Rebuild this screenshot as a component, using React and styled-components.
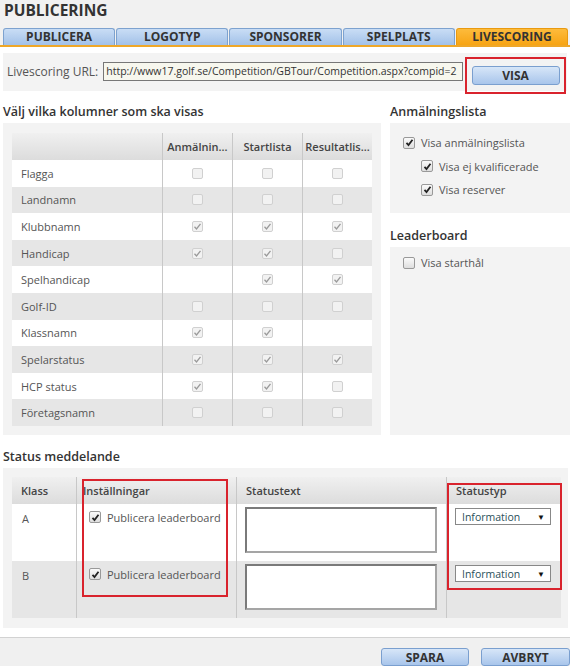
import React from 'react'
import styled, { createGlobalStyle } from 'styled-components'

const GlobalStyle = createGlobalStyle`
  body {
    margin: 0;
    background: #ffffff;
    font-family: 'Open Sans', 'Liberation Sans', sans-serif;
    color: #444;
  }
`

const Page = styled.div`
  width: 570px;
  height: 666px;
  overflow: hidden;
  display: flex;
  flex-direction: column;
`

const Header = styled.div`
  height: 28px;
  background: #f1f1f1;
  padding: 0 0 0 4px;
  box-sizing: border-box;
`

const Title = styled.h1`
  margin: 0;
  font-size: 15.5px;
  line-height: 20px;
  font-weight: 700;
  color: #333;
`

const Tabs = styled.div`
  display: flex;
  gap: 1px;
  padding: 0 2px 0 3px;
  background: #f1f1f1;
  border-bottom: 2px solid #efa728;
`

const Tab = styled.div`
  flex: 1;
  height: 16px;
  display: flex;
  align-items: center;
  justify-content: center;
  font-size: 12px;
  font-weight: 700;
  color: #333;
  border: 1px solid ${p => (p.active ? '#e99a10' : '#7da2cf')};
  border-bottom: none;
  border-radius: 3px 3px 0 0;
  background: ${p =>
    p.active
      ? 'linear-gradient(#fdbb3c, #f7a414)'
      : 'linear-gradient(#c9ddf5, #a2c1e8)'};
`

const UrlPanel = styled.div`
  margin: 6px 3px 0;
  height: 39px;
  background: #f3f3f3;
  display: flex;
  align-items: center;
  padding-left: 4px;
  position: relative;
`

const UrlLabel = styled.span`
  font-size: 12px;
  color: #555;
  margin-right: 5px;
`

const UrlInput = styled.div`
  width: 356px;
  height: 17px;
  border: 1px solid #777;
  background: #f7f7ee;
  font-size: 10.5px;
  color: #333;
  line-height: 17px;
  padding-left: 2px;
  white-space: nowrap;
  overflow: hidden;
`

const VisaFrame = styled.div`
  position: absolute;
  left: 462px;
  top: 4px;
  width: 97px;
  height: 33px;
  border: 2px solid #d9232d;
  display: flex;
  align-items: center;
  justify-content: center;
`

const Button = styled.button`
  width: ${p => p.w || 86}px;
  height: ${p => p.h || 19}px;
  border: 1px solid #7a9fcf;
  border-radius: 3px;
  background: linear-gradient(#d7e6f8, #a8c5eb);
  font-family: 'Open Sans', 'Liberation Sans', sans-serif;
  font-size: 12px;
  font-weight: 700;
  color: #333;
  padding: 0;
`

const Columns = styled.div`
  display: grid;
  grid-template-columns: 378px 180px;
  column-gap: 9px;
  padding-left: 3px;
  margin-top: 9px;
`

const Col = styled.div`
  display: flex;
  flex-direction: column;
`

const Section = styled(Col)`
  padding: 0 2px 0 3px;
  margin-top: 10px;
`

const Heading = styled.h2`
  margin: 0;
  height: 23px;
  display: flex;
  align-items: center;
  font-size: 12.5px;
  font-weight: 600;
  color: #333;
`

const Panel = styled.div`
  background: #f3f3f3;
  padding: ${p => p.pad || '10px 9px 9px'};
  height: ${p => (p.h ? `${p.h}px` : 'auto')};
  box-sizing: border-box;
  margin-bottom: ${p => p.mb || 0}px;
`

const Grid = styled.div`
  display: grid;
  grid-template-columns: ${p => p.cols};
`

const HeadCell = styled.div`
  height: 27px;
  display: flex;
  align-items: center;
  justify-content: ${p => (p.center ? 'center' : 'flex-start')};
  padding-left: ${p => (p.center ? 0 : p.pl || 9)}px;
  background: linear-gradient(#f0f0f0, #dcdcdc);
  border-left: ${p => (p.first ? 'none' : '1px solid #c8c8c8')};
  font-size: 11px;
  font-weight: 600;
  color: #444;
  white-space: nowrap;
`

const Cell = styled.div`
  height: ${p => p.h || 26.6}px;
  display: flex;
  align-items: ${p => (p.top ? 'flex-start' : 'center')};
  justify-content: ${p => (p.center ? 'center' : 'flex-start')};
  padding-left: ${p => (p.center ? 0 : p.pl || 9)}px;
  padding-top: ${p => (p.top ? p.pt || 4 : 0)}px;
  box-sizing: border-box;
  background: ${p => (p.odd ? '#e6e6e6' : '#ffffff')};
  border-left: ${p => (p.first ? 'none' : '1px solid #c8c8c8')};
  font-size: 11px;
  color: #555;
`

const Box = styled.span`
  width: ${p => (p.dim ? 11 : 12)}px;
  height: ${p => (p.dim ? 11 : 12)}px;
  box-sizing: border-box;
  border: 1px solid ${p => (p.dim ? '#d0d0d0' : '#999')};
  border-radius: 2px;
  background: ${p => (p.dim ? '#f2f2f2' : 'linear-gradient(#fafafa, #dedede)')};
  display: inline-flex;
  align-items: center;
  justify-content: center;
  flex-shrink: 0;
`

const Check = ({ on, dim }) => (
  <Box dim={dim}>
    {on && (
      <svg width="9" height="9" viewBox="0 0 9 9">
        <path
          d="M1.5 4.8 L3.5 7 L7.5 1.8"
          fill="none"
          stroke={dim ? '#9a9a9a' : '#222'}
          strokeWidth={dim ? 1.3 : 1.8}
        />
      </svg>
    )}
  </Box>
)

const Option = styled.label`
  display: flex;
  align-items: center;
  gap: 6px;
  height: ${p => p.h || 23.5}px;
  padding-left: ${p => p.indent || 0}px;
  font-size: 11px;
  color: #555;
  white-space: nowrap;
`

const OptionList = styled.div`
  padding: ${p => p.pt || 8}px 0 0 13px;
`

const StatusFrame = styled.div`
  position: relative;
`

const RedBox = styled.div`
  position: absolute;
  left: ${p => p.x}px;
  top: ${p => p.y}px;
  width: ${p => p.w}px;
  height: ${p => p.h}px;
  box-sizing: border-box;
  border: 2px solid #d9232d;
  pointer-events: none;
`

const TextArea = styled.div`
  width: 192px;
  height: 46px;
  box-sizing: border-box;
  border: 2px solid #a5a5a5;
  border-top-color: #7a7a7a;
  border-left-color: #7a7a7a;
  background: #fff;
`

const Select = styled.div`
  width: 96px;
  height: 17px;
  box-sizing: border-box;
  border: 1px solid #888;
  background: #fff;
  display: flex;
  align-items: center;
  justify-content: space-between;
  padding: 0 5px 0 6px;
  font-size: 10.5px;
  color: #2a4f5a;
  & span:last-child {
    font-size: 8px;
    color: #111;
  }
`

const Footer = styled.div`
  margin-top: 9px;
  border-top: 1px solid #d2d2d2;
  background: #f0f0f0;
  flex: 1;
  display: flex;
  justify-content: flex-end;
  align-items: flex-start;
  gap: 12px;
  padding: 10px 0 0 0;
`

const rows = [
  ['Flagga', 0, 0, 0],
  ['Landnamn', 0, 0, 0],
  ['Klubbnamn', 1, 1, 1],
  ['Handicap', 1, 1, 0],
  ['Spelhandicap', null, 1, 1],
  ['Golf-ID', 0, 0, 0],
  ['Klassnamn', 1, 1, null],
  ['Spelarstatus', 1, 1, 1],
  ['HCP status', 1, 1, 0],
  ['Företagsnamn', 0, 0, 0],
]

const classes = ['A', 'B']

export default function App() {
  return (
    <Page>
      <GlobalStyle />
      <Header>
        <Title>PUBLICERING</Title>
      </Header>
      <Tabs>
        <Tab>PUBLICERA</Tab>
        <Tab>LOGOTYP</Tab>
        <Tab>SPONSORER</Tab>
        <Tab>SPELPLATS</Tab>
        <Tab active>LIVESCORING</Tab>
      </Tabs>
      <UrlPanel>
        <UrlLabel>Livescoring URL:</UrlLabel>
        <UrlInput>http://www17.golf.se/Competition/GBTour/Competition.aspx?compid=2</UrlInput>
        <VisaFrame>
          <Button w={88}>VISA</Button>
        </VisaFrame>
      </UrlPanel>

      <Columns>
        <Col>
          <Heading>Välj vilka kolumner som ska visas</Heading>
          <Panel>
            <Grid cols="150px 70px 70px 70px">
              <HeadCell first />
              <HeadCell center>Anmälnin...</HeadCell>
              <HeadCell center>Startlista</HeadCell>
              <HeadCell center>Resultatlis...</HeadCell>
              {rows.map(([name, a, b, c], i) => (
                <React.Fragment key={name}>
                  <Cell first odd={i % 2 === 1}>{name}</Cell>
                  {[a, b, c].map((v, j) => (
                    <Cell key={j} center odd={i % 2 === 1}>
                      {v !== null && <Check dim on={v === 1} />}
                    </Cell>
                  ))}
                </React.Fragment>
              ))}
            </Grid>
          </Panel>
        </Col>
        <Col>
          <Heading>Anmälningslista</Heading>
          <Panel pad="0" h={90} mb={11}>
            <OptionList>
              <Option><Check on />Visa anmälningslista</Option>
              <Option indent={18}><Check on />Visa ej kvalificerade</Option>
              <Option indent={18}><Check on />Visa reserver</Option>
            </OptionList>
          </Panel>
          <Heading>Leaderboard</Heading>
          <Panel pad="0" h={188}>
            <OptionList pt={4}>
              <Option><Check />Visa starthål</Option>
            </OptionList>
          </Panel>
        </Col>
      </Columns>

      <Section>
        <Heading>Status meddelande</Heading>
        <Panel pad="9px 9px 10px 9px">
          <StatusFrame>
            <Grid cols="64px 160px 210px 115px">
              <HeadCell first>Klass</HeadCell>
              <HeadCell pl={6}>Inställningar</HeadCell>
              <HeadCell>Statustext</HeadCell>
              <HeadCell>Statustyp</HeadCell>
              {classes.map((k, i) => (
                <React.Fragment key={k}>
                  <Cell first top pt={7} pl={10} h={57} odd={i === 1}>{k}</Cell>
                  <Cell top pt={7} pl={12} h={57} odd={i === 1}>
                    <Option h={12}><Check on />Publicera leaderboard</Option>
                  </Cell>
                  <Cell top pt={3} pl={8} h={57} odd={i === 1}>
                    <TextArea />
                  </Cell>
                  <Cell top pt={4} pl={8} h={57} odd={i === 1}>
                    <Select><span>Information</span><span>▼</span></Select>
                  </Cell>
                </React.Fragment>
              ))}
            </Grid>
            <RedBox x={70} y={2} w={146} h={118} />
            <RedBox x={435} y={6} w={115} h={107} />
          </StatusFrame>
        </Panel>
      </Section>

      <Footer>
        <Button w={88} h={18}>SPARA</Button>
        <Button w={89} h={18}>AVBRYT</Button>
      </Footer>
    </Page>
  )
}
